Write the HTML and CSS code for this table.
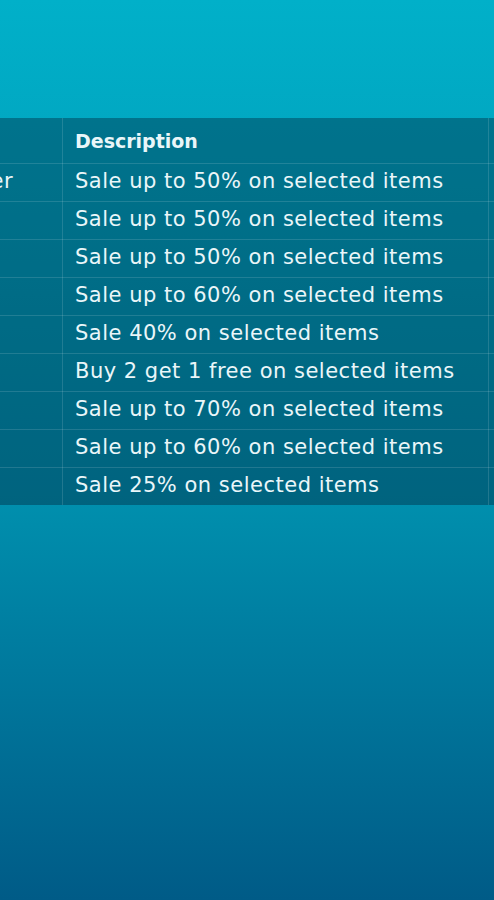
FILE: index.html
```html
<!DOCTYPE html>
<html lang="en">
<head>
<meta charset="utf-8">
<title>Promotions</title>
<link rel="stylesheet" href="styles.css">
</head>
<body>
<main class="page">
  <div class="table-scroll">
    <table class="promo-table">
      <thead>
        <tr><th class="col-name"></th><th class="col-desc">Description</th><th class="col-more"></th></tr>
      </thead>
      <tbody>
        <tr><td class="col-name">Summer</td><td>Sale up to 50% on selected items</td><td></td></tr>
        <tr><td class="col-name"></td><td>Sale up to 50% on selected items</td><td></td></tr>
        <tr><td class="col-name"></td><td>Sale up to 50% on selected items</td><td></td></tr>
        <tr><td class="col-name"></td><td>Sale up to 60% on selected items</td><td></td></tr>
        <tr><td class="col-name"></td><td>Sale 40% on selected items</td><td></td></tr>
        <tr><td class="col-name"></td><td>Buy 2 get 1 free on selected items</td><td></td></tr>
        <tr><td class="col-name"></td><td>Sale up to 70% on selected items</td><td></td></tr>
        <tr><td class="col-name"></td><td>Sale up to 60% on selected items</td><td></td></tr>
        <tr><td class="col-name"></td><td>Sale 25% on selected items</td><td></td></tr>
      </tbody>
    </table>
  </div>
</main>
</body>
</html>
```
FILE: styles.css
```css
html, body {
  margin: 0;
  padding: 0;
}
body {
  min-height: 900px;
  background: linear-gradient(180deg, #01b0c9 0%, #0090ae 55%, #005b87 100%);
  font-family: "DejaVu Sans", "Open Sans", sans-serif;
  color: #eaf6f9;
}
.page {
  padding-top: 118px;
}
.table-scroll {
  overflow: hidden;
  width: 494px;
}
.promo-table {
  border-collapse: collapse;
  table-layout: fixed;
  width: 722px;
  margin-left: -91px;
  background: rgba(0, 22, 44, 0.36);
  font-size: 21px;
  letter-spacing: 0.5px;
  white-space: nowrap;
}
.promo-table th,
.promo-table td {
  text-align: left;
  padding: 0 12px;
  border-bottom: 1px solid rgba(255, 255, 255, 0.13);
  border-right: 1px solid rgba(255, 255, 255, 0.13);
  overflow: hidden;
}
.promo-table th {
  height: 45px;
  font-weight: 600;
  font-size: 19px;
  letter-spacing: 0;
}
.promo-table td {
  height: 34px;
  padding-bottom: 3px;
  font-weight: 400;
}
.promo-table tbody tr:last-child td {
  border-bottom: none;
}
.col-name {
  width: 129px;
}
.col-desc {
  width: 401px;
}
.col-more {
  width: 120px;
}
```
